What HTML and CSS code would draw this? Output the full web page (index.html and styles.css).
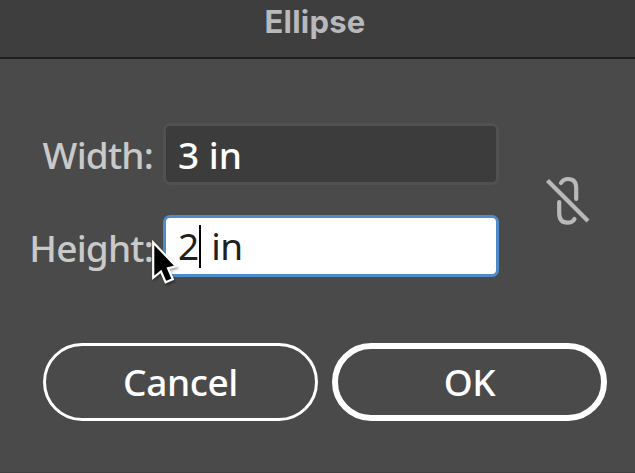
FILE: index.html
```html
<!DOCTYPE html>
<html lang="en">
<head>
<meta charset="utf-8">
<title>Ellipse</title>
<link rel="stylesheet" href="styles.css">
</head>
<body>
<main class="dialog">
  <header class="titlebar"><h1 class="title">Ellipse</h1></header>
  <section class="content">
    <div class="fields">
      <div class="row">
        <span class="label label-width">Width:</span>
        <div class="field"><span class="value value-width">3 in</span></div>
      </div>
      <div class="row">
        <span class="label label-height">Height:</span>
        <div class="field focused"><span class="value">2</span><span class="caret"></span><span class="value unit">in</span></div>
      </div>
    </div>
    <svg class="link" width="48" height="52" viewBox="544 175 48 52" fill="none" stroke="#b9b9b9" stroke-width="4.2">
      <path stroke-linecap="round" d="M561 183C562.500 180.500 565 179 568 179Q576.200 179 576.200 188V199M559.200 202V213Q559.200 222.700 567.500 222.700Q572.500 222.700 574.500 219"/>
      <path d="M547.500 180.500L588 221"/>
    </svg>
  </section>
  <footer class="actions">
    <button class="button cancel"><span>Cancel</span></button>
    <button class="button ok"><span>OK</span></button>
  </footer>
  <svg class="cursor" width="34" height="50" viewBox="147 237 34 50">
    <path d="M153.200 242.500V277.800L161 271.500L165.600 282.300L172.800 279.200L168 268.300L176 266.200Z" fill="#000" stroke="#fff" stroke-width="2.200"/>
  </svg>
</main>
</body>
</html>
```
FILE: styles.css
```css
* { box-sizing: border-box; }
body { margin: 0; }
.dialog {
  position: relative;
  width: 635px;
  height: 473px;
  overflow: hidden;
  background: #4a4a4a;
  border-bottom: 1px solid #404040;
  font-family: "Noto Sans", sans-serif;
  color: #fff;
}
.titlebar {
  height: 59px;
  background: #3e3e3e;
  border-bottom: 2px solid #1d1d1d;
  display: flex;
  justify-content: center;
}
.title {
  margin: 2px 5px 0 0;
  font: 700 31px/40px Inter, sans-serif;
  letter-spacing: 0.2px;
  color: #b9b9bb;
}
.content {
  display: flex;
  align-items: flex-start;
  padding-top: 64px;
  height: 284px;
}
.fields { display: grid; gap: 30px; width: 499px; }
.row { display: grid; grid-template-columns: 163px 336px; height: 62px; align-items: center; }
.label {
  justify-self: end;
  margin-right: 10px;
  padding-top: 4px;
  font-size: 37px;
  font-weight: 500;
  letter-spacing: -0.8px;
  line-height: 50px;
  white-space: nowrap;
  color: #c9c9c9;
}
.label-width { padding-top: 2px; }
.field {
  display: flex;
  align-items: center;
  height: 62px;
  padding-left: 12px;
  background: #3c3c3c;
  border: 3px solid #515151;
  border-radius: 7px;
}
.focused { background: #fff; border-color: #4f8bcb; color: #202020; }
.value { font-size: 37px; line-height: 50px; white-space: pre; }
.value-width { padding-top: 2px; font-weight: 500; }
.caret { width: 2px; height: 43px; background: #000; }
.unit { margin-left: 10px; letter-spacing: -0.5px; }
.link { margin: 52px 0 0 45px; }
.actions { display: flex; gap: 14px; padding-left: 43px; }
.button {
  display: flex;
  justify-content: center;
  align-items: center;
  width: 275px;
  height: 78px;
  padding: 0;
  border: 3px solid #fff;
  border-radius: 39px;
  background: transparent;
  color: #fff;
  font: 500 37px/50px "Noto Sans", sans-serif;
  letter-spacing: -0.4px;
}
.ok { border-width: 6px; }
.cursor { position: absolute; left: 147px; top: 237px; filter: drop-shadow(1px 2px 1px #0005); }
```
